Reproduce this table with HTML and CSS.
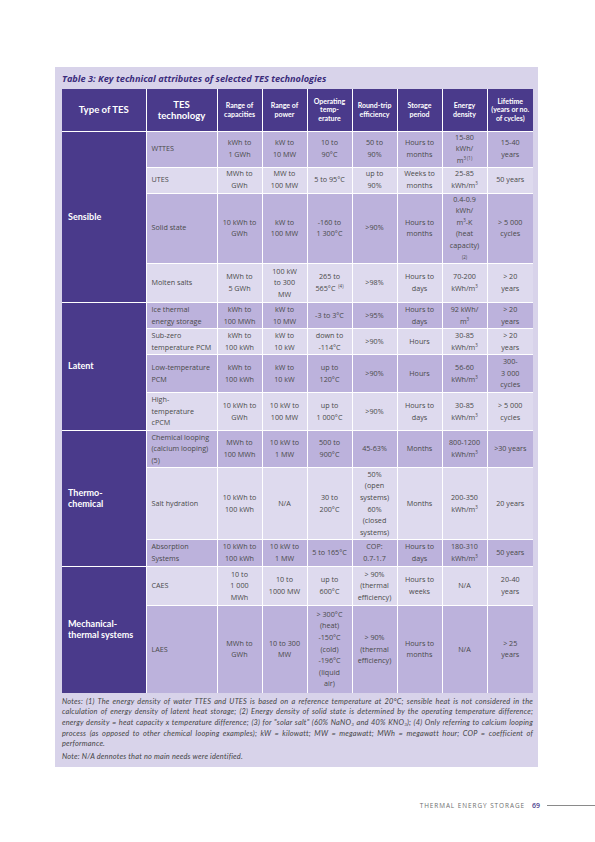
FILE: index.html
```html
<!DOCTYPE html>
<html lang="en">
<head>
<meta charset="utf-8">
<title>Table 3</title>
<link rel="stylesheet" href="styles.css">
</head>
<body>
<div class="panel">
  <div class="title">Table 3: Key technical attributes of selected TES technologies</div>
  <table class="tes">
    <colgroup>
      <col class="c1"><col class="c2"><col class="cn"><col class="cn"><col class="cn"><col class="cn"><col class="cn"><col class="cn"><col class="c9">
    </colgroup>
    <thead>
      <tr class="r-head">
        <th class="big">Type of TES</th>
        <th class="big">TES<br>technology</th>
        <th>Range of<br>capacities</th>
        <th>Range of<br>power</th>
        <th>Operating<br>temp-<br>erature</th>
        <th>Round-trip<br>efficiency</th>
        <th>Storage<br>period</th>
        <th>Energy<br>density</th>
        <th>Lifetime<br>(years or no.<br>of cycles)</th>
      </tr>
    </thead>
    <tbody>
      <tr class="m h36">
        <td class="type" rowspan="4">Sensible</td>
        <td class="tech">WTTES</td>
        <td>kWh to<br>1 GWh</td>
        <td>kW to<br>10 MW</td>
        <td>10 to<br>90°C</td>
        <td>50 to<br>90%</td>
        <td>Hours to<br>months</td>
        <td>15-80<br>kWh/<br>m<sup>3</sup><sup class="ref">(1)</sup></td>
        <td>15-40<br>years</td>
      </tr>
      <tr class="l h26">
        <td class="tech">UTES</td>
        <td>MWh to<br>GWh</td>
        <td>MW to<br>100 MW</td>
        <td>5 to 95°C</td>
        <td>up to<br>90%</td>
        <td>Weeks to<br>months</td>
        <td>25-85<br>kWh/m<sup>3</sup></td>
        <td>50 years</td>
      </tr>
      <tr class="m h70">
        <td class="tech">Solid state</td>
        <td>10 kWh to<br>GWh</td>
        <td>kW to<br>100 MW</td>
        <td>-160 to<br>1 300°C</td>
        <td>&gt;90%</td>
        <td>Hours to<br>months</td>
        <td>0.4-0.9<br>kWh/<br>m<sup>3</sup>-K<br>(heat<br>capacity)<br><span class="refline">(2)</span></td>
        <td>&gt; 5 000<br>cycles</td>
      </tr>
      <tr class="l h39">
        <td class="tech">Molten salts</td>
        <td>MWh to<br>5 GWh</td>
        <td>100 kW<br>to 300<br>MW</td>
        <td>265 to<br>565°C <sup class="ref">(4)</sup></td>
        <td>&gt;98%</td>
        <td>Hours to<br>days</td>
        <td>70-200<br>kWh/m<sup>3</sup></td>
        <td>&gt; 20<br>years</td>
      </tr>
      <tr class="m h26">
        <td class="type" rowspan="4">Latent</td>
        <td class="tech">Ice thermal<br>energy storage</td>
        <td>kWh to<br>100 MWh</td>
        <td>kW to<br>10 MW</td>
        <td>-3 to 3°C</td>
        <td>&gt;95%</td>
        <td>Hours to<br>days</td>
        <td>92 kWh/<br>m<sup>3</sup></td>
        <td>&gt; 20<br>years</td>
      </tr>
      <tr class="l h26">
        <td class="tech">Sub-zero<br>temperature PCM</td>
        <td>kWh to<br>100 kWh</td>
        <td>kW to<br>10 kW</td>
        <td>down to<br>-114°C</td>
        <td>&gt;90%</td>
        <td>Hours</td>
        <td>30-85<br>kWh/m<sup>3</sup></td>
        <td>&gt; 20<br>years</td>
      </tr>
      <tr class="m h38">
        <td class="tech">Low-temperature<br>PCM</td>
        <td>kWh to<br>100 kWh</td>
        <td>kW to<br>10 kW</td>
        <td>up to<br>120°C</td>
        <td>&gt;90%</td>
        <td>Hours</td>
        <td>56-60<br>kWh/m<sup>3</sup></td>
        <td>300-<br>3 000<br>cycles</td>
      </tr>
      <tr class="l h38">
        <td class="tech">High-<br>temperature<br>cPCM</td>
        <td>10 kWh to<br>GWh</td>
        <td>10 kW to<br>100 MW</td>
        <td>up to<br>1 000°C</td>
        <td>&gt;90%</td>
        <td>Hours to<br>days</td>
        <td>30-85<br>kWh/m<sup>3</sup></td>
        <td>&gt; 5 000<br>cycles</td>
      </tr>
      <tr class="m h37">
        <td class="type" rowspan="3">Thermo-<br>chemical</td>
        <td class="tech">Chemical looping<br>(calcium looping)<br>(5)</td>
        <td>MWh to<br>100 MWh</td>
        <td>10 kW to<br>1 MW</td>
        <td>500 to<br>900°C</td>
        <td>45-63%</td>
        <td>Months</td>
        <td>800-1200<br>kWh/m<sup>3</sup></td>
        <td>&gt;30 years</td>
      </tr>
      <tr class="l h72">
        <td class="tech">Salt hydration</td>
        <td>10 kWh to<br>100 kWh</td>
        <td>N/A</td>
        <td>30 to<br>200°C</td>
        <td>50%<br>(open<br>systems)<br>60%<br>(closed<br>systems)</td>
        <td>Months</td>
        <td>200-350<br>kWh/m<sup>3</sup></td>
        <td>20 years</td>
      </tr>
      <tr class="m h27">
        <td class="tech">Absorption<br>Systems</td>
        <td>10 kWh to<br>100 kWh</td>
        <td>10 kW to<br>1 MW</td>
        <td>5 to 165°C</td>
        <td>COP:<br>0.7-1.7</td>
        <td>Hours to<br>days</td>
        <td>180-310<br>kWh/m<sup>3</sup></td>
        <td>50 years</td>
      </tr>
      <tr class="l h39">
        <td class="type" rowspan="2">Mechanical-<br>thermal systems</td>
        <td class="tech">CAES</td>
        <td>10 to<br>1 000<br>MWh</td>
        <td>10 to<br>1000 MW</td>
        <td>up to<br>600°C</td>
        <td>&gt; 90%<br>(thermal<br>efficiency)</td>
        <td>Hours to<br>weeks</td>
        <td>N/A</td>
        <td>20-40<br>years</td>
      </tr>
      <tr class="m h87">
        <td class="tech">LAES</td>
        <td>MWh to<br>GWh</td>
        <td>10 to 300<br>MW</td>
        <td>&gt; 300°C<br>(heat)<br>-150°C<br>(cold)<br>-196°C<br>(liquid<br>air)</td>
        <td>&gt; 90%<br>(thermal<br>efficiency)</td>
        <td>Hours to<br>months</td>
        <td>N/A</td>
        <td>&gt; 25<br>years</td>
      </tr>
    </tbody>
  </table>
  <div class="notes">
    <div class="ln">Notes: (1) The energy density of water TTES and UTES is based on a reference temperature at 20°C; sensible heat is not considered in the</div>
    <div class="ln">calculation of energy density of latent heat storage; (2) Energy density of solid state is determined by the operating temperature difference;</div>
    <div class="ln">energy density = heat capacity x temperature difference; (3) for "solar salt" (60% NaNO<sub>3</sub> and 40% KNO<sub>3</sub>); (4) Only referring to calcium looping</div>
    <div class="ln">process (as opposed to other chemical looping examples); kW = kilowatt; MW = megawatt; MWh = megawatt hour; COP = coefficient of</div>
    <div class="ln last">performance.</div>
    <div class="na">Note: N/A dennotes that no main needs were identified.</div>
  </div>
</div>
<div class="footer">
  <span class="ftext">THERMAL ENERGY STORAGE</span>
  <span class="fnum">69</span>
  <span class="fline"></span>
</div>
</body>
</html>
```

FILE: styles.css
```css
html, body {
  margin: 0;
  padding: 0;
}
body {
  width: 595px;
  height: 842px;
  background: #ffffff;
  font-family: "Open Sans", "DejaVu Sans", sans-serif;
  color: #444444;
}
.panel {
  margin: 67px 0 0 55px;
  width: 483px;
  box-sizing: border-box;
  padding: 6px 5px 5px 7px;
  background: #d8d3ea;
}
.title {
  font-family: "Open Sans", Lato, sans-serif;
  font-style: italic;
  font-weight: 700;
  font-size: 9.2px;
  line-height: 12px;
  color: #3c2d7c;
  margin-bottom: 4px;
}
.tes {
  width: 471px;
  table-layout: fixed;
  border-collapse: collapse;
  border-style: hidden;
}
.c1 { width: 84px; }
.c2 { width: 71px; }
.cn { width: 45px; }
.c9 { width: 46px; }
.tes th, .tes td {
  border: 1.5px solid #ffffff;
  padding: 0 1px;
  text-align: center;
  vertical-align: middle;
  white-space: nowrap;
}
.tes th {
  background: #4a3a8b;
  color: #ffffff;
  font-family: Lato, "Open Sans", sans-serif;
  font-weight: 700;
  font-size: 7px;
  line-height: 8.6px;
}
.tes th.big {
  font-size: 9.6px;
  line-height: 11px;
}
.r-head { height: 42px; }
.tes td {
  font-size: 7.2px;
  line-height: 11.6px;
  color: #4a4a4a;
}
.tes td.type {
  background: #4a3a8b;
  color: #ffffff;
  text-align: left;
  padding-left: 6px;
  font-family: Lato, "Open Sans", sans-serif;
  font-weight: 700;
  font-size: 9px;
  line-height: 10.5px;
}
.tes td.tech {
  text-align: left;
  padding-left: 5px;
}
tr.m td { background: #bcb2dc; }
tr.l td { background: #dedaee; }
tr.m td.type, tr.l td.type { background: #4a3a8b; }
.h26 { height: 26px; }
.h27 { height: 27px; }
.h36 { height: 36px; }
.h37 { height: 37px; }
.h38 { height: 38px; }
.h39 { height: 39px; }
.h70 { height: 70px; }
.h72 { height: 72px; }
.h87 { height: 87px; }
sup {
  font-size: 4.5px;
  line-height: 0;
  vertical-align: 3px;
}
sup.ref { margin-left: 1px; }
.refline {
  font-size: 4.5px;
  line-height: 6px;
  display: inline-block;
}
.notes {
  margin-top: 4px;
  font-family: Lato, "Open Sans", sans-serif;
  font-style: italic;
  font-size: 7.4px;
  letter-spacing: 0.2px;
  line-height: 10.7px;
  color: #444444;
}
.ln {
  white-space: nowrap;
  text-align: justify;
  text-align-last: justify;
}
.ln.last {
  text-align-last: left;
}
.notes sub {
  font-size: 4.5px;
  line-height: 0;
  vertical-align: -1px;
}
.na {
  margin-top: 1.5px;
}
.footer {
  margin-top: 33px;
  display: flex;
  align-items: center;
  justify-content: flex-end;
  gap: 7px;
  height: 10px;
}
.ftext {
  font-family: "Open Sans", sans-serif;
  font-size: 6.4px;
  letter-spacing: 0.95px;
  color: #6d6d6d;
}
.fnum {
  font-family: "Open Sans", sans-serif;
  font-size: 7px;
  color: #4a3a8b;
  font-weight: 600;
}
.fline {
  width: 48px;
  height: 0;
  border-top: 0.7px solid #8a8a8a;
}
```
